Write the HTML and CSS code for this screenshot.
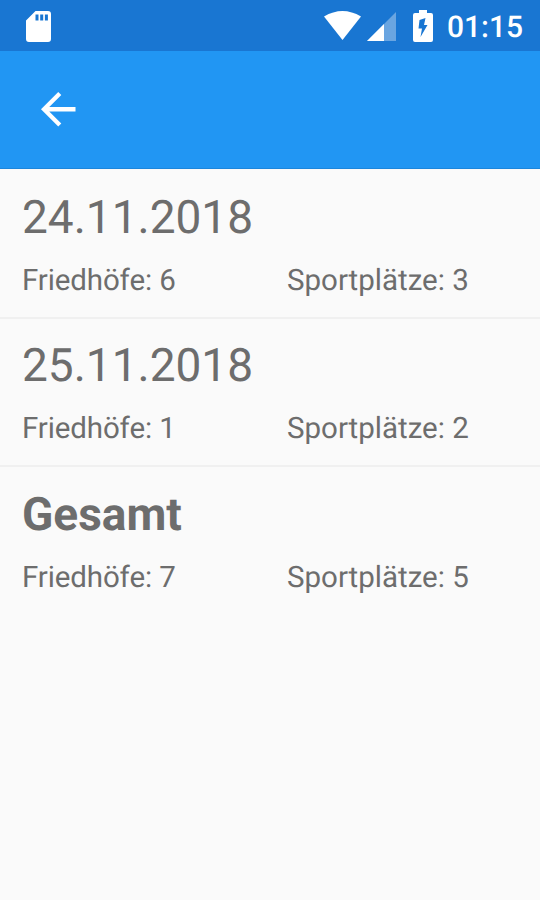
FILE: index.html
```html
<!DOCTYPE html>
<html lang="de">
<head>
<meta charset="utf-8">
<title>Übersicht</title>
<link rel="stylesheet" href="styles.css">
</head>
<body>
<header class="status">
  <svg class="sd" viewBox="0 0 25 31"><path fill-rule="evenodd" d="M9.500 0H22a3 3 0 0 1 3 3V28a3 3 0 0 1-3 3H3a3 3 0 0 1-3-3V9.500ZM9.500 3.500v6h3v-6ZM14.200 3.500v6h3v-6ZM18.900 3.500v6h3v-6Z"/></svg>
  <div class="indicators">
    <svg class="wifi" viewBox="0 0 37 29"><path d="M18.500 29L0 5.500Q18.500-5.500 37 5.500Z"/></svg>
    <svg class="signal" viewBox="0 0 29 29"><path opacity=".35" d="M0 29L29 0V29Z"/><path d="M0 29L17 12V29Z"/></svg>
    <svg class="battery" viewBox="0 0 20 32"><path fill-rule="evenodd" d="M6 0h8v3h4a2 2 0 0 1 2 2v25a2 2 0 0 1-2 2H2a2 2 0 0 1-2-2V5a2 2 0 0 1 2-2h4ZM12.500 8L6.500 10L5.500 18.500H9L7.500 27L14.500 15H11Z"/></svg>
    <span class="clock">01:15</span>
  </div>
</header>
<nav class="toolbar">
  <svg class="back" viewBox="4 4 16 16"><path d="M20 11H7.830l5.590-5.590L12 4l-8 8 8 8 1.410-1.410L7.830 13H20z"/></svg>
</nav>
<main>
  <section class="entry"><h2>24.11.2018</h2><div class="counts"><span>Friedhöfe: 6</span><span>Sportplätze: 3</span></div></section>
  <section class="entry"><h2>25.11.2018</h2><div class="counts"><span>Friedhöfe: 1</span><span>Sportplätze: 2</span></div></section>
  <section class="entry total"><h2>Gesamt</h2><div class="counts"><span>Friedhöfe: 7</span><span>Sportplätze: 5</span></div></section>
</main>
</body>
</html>
```
FILE: styles.css
```css
* { box-sizing: border-box; }
body { margin: 0; height: 900px; overflow: hidden; background: #fafafa; color: #6d6d6d; font-family: Roboto, sans-serif; text-rendering: geometricPrecision; }
svg { display: block; fill: #fff; }
.status { height: 51px; padding: 1px 17px 0 26px; display: flex; align-items: center; justify-content: space-between; background: #1976d2; }
.sd { width: 25px; height: 31px; }
.indicators { display: flex; align-items: center; }
.wifi { width: 37px; height: 29px; margin-bottom: 2px; }
.signal { width: 29px; height: 29px; margin-left: 6px; }
.battery { width: 20px; height: 32px; margin-left: 17px; }
.clock { margin-left: 14px; padding-top: 3px; color: #fff; font-size: 30px; font-weight: 500; line-height: 36px; }
.toolbar { height: 118px; padding: 0 41px; display: flex; align-items: center; background: #2196f3; border-bottom: 1px solid #1c86dc; }
.back { width: 34.5px; height: 34.5px; }
main { padding-top: 1.5px; }
.entry { height: 148.2px; padding: 17.5px 22px 0; border-bottom: 2px solid #f0f0f0; }
.entry h2 { margin: 0; font-size: 46px; font-weight: 400; line-height: 60px; }
.entry.total { padding-top: 18.2px; border: 0; }
.entry.total h2 { font-weight: 700; }
.counts { display: grid; grid-template-columns: 265px 1fr; font-size: 29.5px; line-height: 36px; margin-top: 15px; }
.counts span:first-child { letter-spacing: -0.12px; }
```
